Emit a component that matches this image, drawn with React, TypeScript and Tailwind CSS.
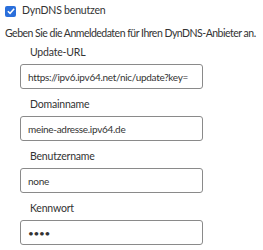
import React from "react";

type FieldProps = {
  label: string;
  value: string;
  type?: string;
};

const Field = ({ label, value, type = "text" }: FieldProps) => (
  <div className="flex flex-col">
    <label className="pl-[10px] mb-[2px] leading-[20px] text-[10.5px] tracking-[-0.2px]">{label}</label>
    <input
      type={type}
      defaultValue={value}
      readOnly
      className="w-[183px] h-[25px] mb-[5px] rounded-[3px] border border-[#8a8a8a] bg-white px-[7px] text-[10px] tracking-[-0.3px] text-[#333] outline-none font-['Lato',sans-serif]"
    />
  </div>
);

export default function App() {
  return (
    <div className="w-[263px] h-[250px] bg-white font-['Lato',sans-serif] text-[#333]">
      <div className="flex items-center gap-[6px] pl-[5px] h-[22px]">
        <span className="flex h-[11px] w-[11px] items-center justify-center rounded-[2px] bg-[#2a6fdb]">
          <svg viewBox="0 0 12 12" className="h-[10px] w-[10px]">
            <path d="M2.2 6.2 L4.9 8.8 L9.8 3.4" fill="none" stroke="white" strokeWidth="1.8" />
          </svg>
        </span>
        <span className="text-[10.5px] tracking-[-0.2px]">DynDNS benutzen</span>
      </div>
      <p className="pl-[5px] mt-[2px] h-[18px] whitespace-nowrap text-[10.5px] tracking-[-0.5px] leading-[18px]">
        Geben Sie die Anmeldedaten für Ihren DynDNS-Anbieter an.
      </p>
      <div className="flex flex-col pl-[20px]">
        <Field label="Update-URL" value="https://ipv6.ipv64.net/nic/update?key=" />
        <Field label="Domainname" value="meine-adresse.ipv64.de" />
        <Field label="Benutzername" value="none" />
        <Field label="Kennwort" value="1234" type="password" />
      </div>
    </div>
  );
}
